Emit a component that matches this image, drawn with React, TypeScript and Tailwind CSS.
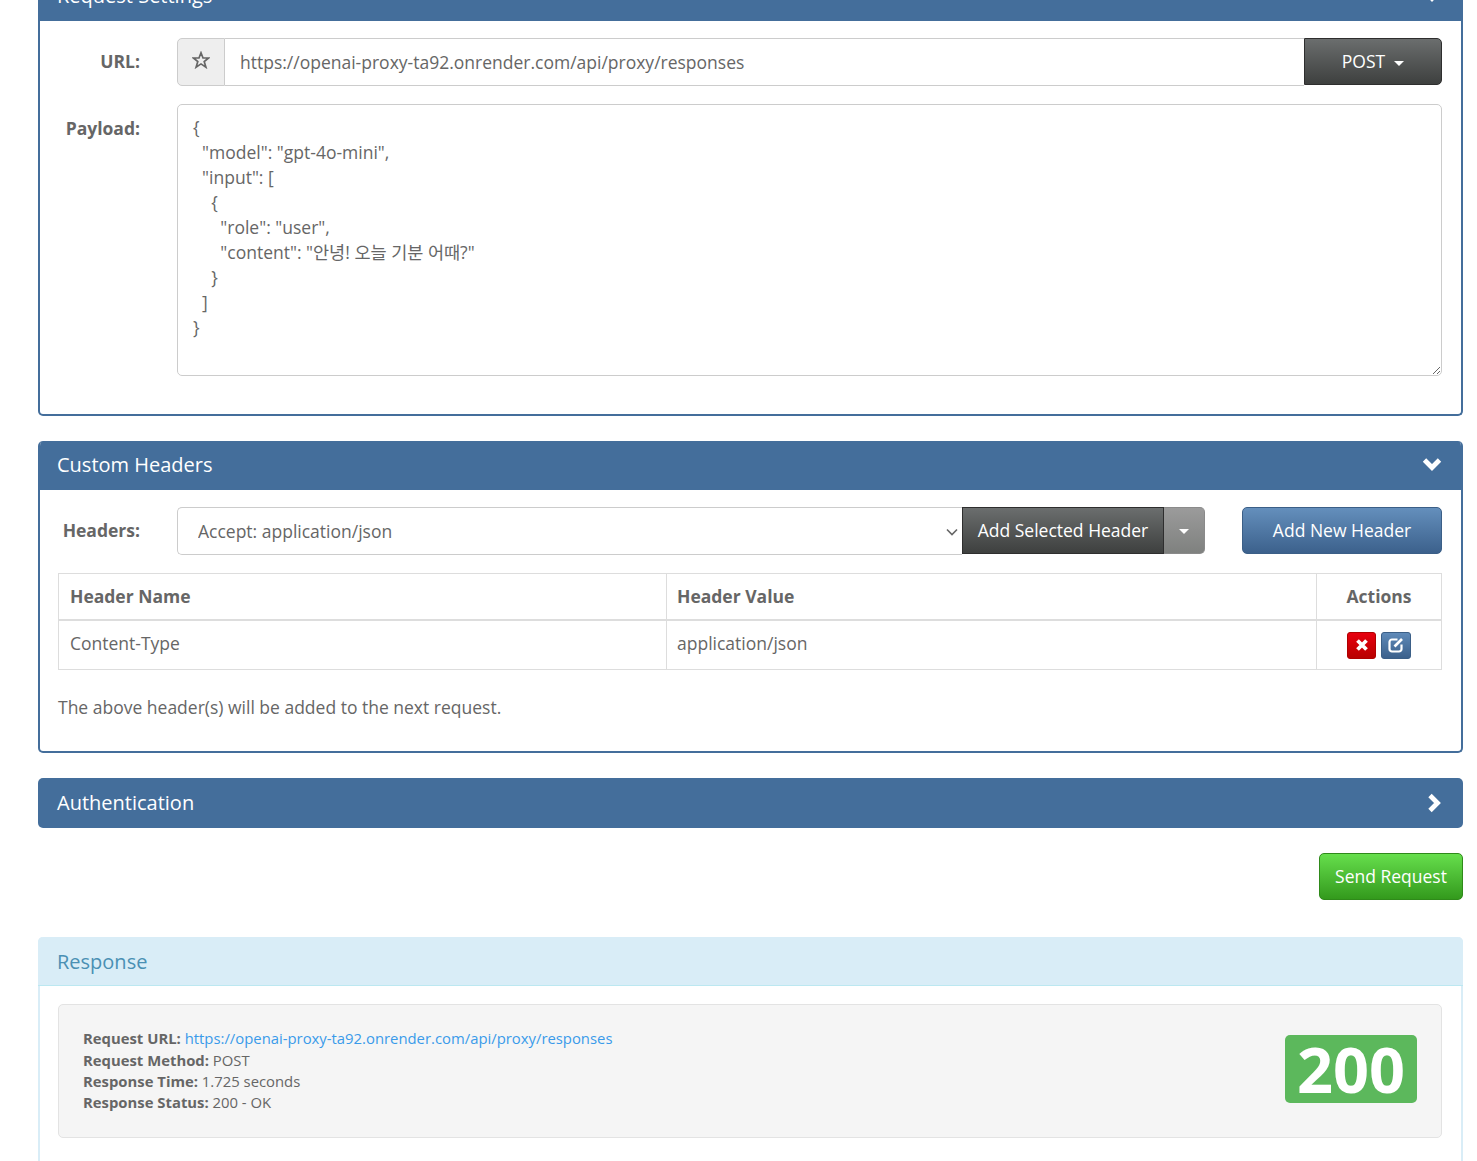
import type { ReactNode } from 'react';

const PAYLOAD = `{
  "model": "gpt-4o-mini",
  "input": [
    {
      "role": "user",
      "content": "안녕! 오늘 기분 어때?"
    }
  ]
}`;

const FONT = "font-['Open_Sans','Noto_Sans_CJK_KR',sans-serif]";

function Caret({ className = '' }: { className?: string }) {
  return <span className={`inline-block w-0 h-0 border-x-[5px] border-x-transparent border-t-[5px] border-t-white ${className}`} />;
}

function PanelHeader({ title, icon }: { title: string; icon?: ReactNode }) {
  return (
    <div className="h-[49px] shrink-0 bg-[#446e9b] flex items-center justify-between pl-[19px] pr-[20px] text-white text-[20px]">
      <span className="-mt-[2px]">{title}</span>
      {icon}
    </div>
  );
}

function ChevronDown() {
  return (
    <svg width="20" height="14" viewBox="0 0 20 14" className="block -mt-[3px] translate-x-[-1px]">
      <path d="M2.5 3 L10 10.5 L17.5 3" fill="none" stroke="white" strokeWidth="4.8" />
    </svg>
  );
}

function ChevronRight() {
  return (
    <svg width="16" height="20" viewBox="0 0 16 20" className="block translate-x-[-1px]">
      <path d="M4 2.5 L11.5 10 L4 17.5" fill="none" stroke="white" strokeWidth="4.8" />
    </svg>
  );
}

export default function App() {
  return (
    <div className={`${FONT} h-[1161px] overflow-hidden bg-white pl-[38px] pr-[14px] text-[#666] text-[17.5px] leading-[25px]`}>
      {/* Request Settings, scrolled partly off the page */}
      <div className="-mt-[28px] rounded-[5px] border-2 border-t-0 border-[#446e9b] overflow-hidden">
        <div className="-mx-[2px]">
          <PanelHeader title="Request Settings" icon={<ChevronDown />} />
        </div>
        <div className="pt-[17px] pl-[18px] pr-[19px] pb-[38px]">
          <div className="flex">
            <label className="w-[82px] shrink-0 text-right font-bold leading-[47px]">URL:</label>
            <div className="ml-[37px] flex-1 flex h-[48px]">
              <span className="w-[48px] shrink-0 flex items-center justify-center bg-[#eee] border border-[#ccc] rounded-l-[5px]">
                <svg width="18" height="18" viewBox="0 0 18 18" className="-mt-[4px]">
                  <polygon
                    points="9,1.8 11,7 16.6,7 12.2,10.6 13.9,16.2 9,12.9 4.1,16.2 5.8,10.6 1.4,7 7,7"
                    fill="none"
                    stroke="#666"
                    strokeWidth="1.7"
                  />
                </svg>
              </span>
              <input
                readOnly
                value="https://openai-proxy-ta92.onrender.com/api/proxy/responses"
                className="flex-1 min-w-0 border-y border-[#ccc] px-[15px] outline-none bg-white"
              />
              <button className="w-[138px] shrink-0 rounded-r-[5px] border border-[#2e2e2e] bg-linear-to-b from-[#6b6e6e] to-[#3e403f] text-white flex items-center justify-center gap-[9px] h-[47px]">
                POST <Caret className="mt-[3px]" />
              </button>
            </div>
          </div>
          <div className="flex mt-[18px]">
            <label className="w-[82px] shrink-0 text-right font-bold pt-[12px]">Payload:</label>
            <textarea
              readOnly
              value={PAYLOAD}
              className="ml-[37px] flex-1 h-[272px] border border-[#ccc] rounded-[5px] pt-[10px] px-[15px] outline-none resize-y bg-white leading-[25px]"
            />
          </div>
        </div>
      </div>

      {/* Custom Headers */}
      <div className="mt-[25px] rounded-[5px] border-2 border-t-0 border-[#446e9b] overflow-hidden">
        <div className="-mx-[2px]">
          <PanelHeader title="Custom Headers" icon={<ChevronDown />} />
        </div>
        <div className="pt-[17px] pl-[18px] pr-[19px] pb-[31px]">
          <div className="flex h-[48px]">
            <label className="w-[82px] shrink-0 text-right font-bold leading-[47px]">Headers:</label>
            <div className="relative ml-[37px] w-[785px] shrink-0">
              <select className="appearance-none w-full h-[48px] border border-[#ccc] border-r-0 rounded-l-[5px] pl-[20px] pr-[24px] bg-white outline-none">
                <option>Accept: application/json</option>
              </select>
              <svg width="12" height="8" viewBox="0 0 12 8" className="absolute right-[4px] top-[21px] pointer-events-none">
                <path d="M1 1.5 L6 6.5 L11 1.5" fill="none" stroke="#666" strokeWidth="1.6" />
              </svg>
            </div>
            <button className="w-[202px] shrink-0 h-[47px] border border-[#2e2e2e] bg-linear-to-b from-[#6b6e6e] to-[#3e403f] text-white">
              Add Selected Header
            </button>
            <button className="w-[41px] shrink-0 h-[47px] rounded-r-[5px] border border-[#8a8a8a] border-l-0 bg-linear-to-b from-[#9b9b9b] to-[#7f817f] flex items-center justify-center">
              <Caret className="mt-[2px]" />
            </button>
            <button className="ml-[37px] flex-1 h-[47px] rounded-[5px] border border-[#3b5f87] bg-linear-to-b from-[#648fbc] to-[#3c618c] text-white">
              Add New Header
            </button>
          </div>

          <table className="mt-[18px] w-full table-fixed border-collapse border border-[#ddd]">
            <colgroup>
              <col className="w-[608px]" />
              <col className="w-[650px]" />
              <col />
            </colgroup>
            <thead>
              <tr className="h-[46px] border-b-2 border-[#ddd]">
                <th className="border-r border-[#ddd] text-left font-bold pl-[11px]">Header Name</th>
                <th className="border-r border-[#ddd] text-left font-bold pl-[10px]">Header Value</th>
                <th className="text-center font-bold">Actions</th>
              </tr>
            </thead>
            <tbody>
              <tr className="h-[50px]">
                <td className="border-r border-[#ddd] pl-[11px] pb-[2px]">Content-Type</td>
                <td className="border-r border-[#ddd] pl-[10px] pb-[2px]">application/json</td>
                <td>
                  <div className="flex justify-center gap-[5px] pt-[1px]">
                    <button className="w-[29px] h-[27px] rounded-[3px] border border-[#b00000] bg-linear-to-b from-[#e8000f] to-[#b80000] flex items-center justify-center">
                      <svg width="14" height="14" viewBox="0 0 14 14">
                        <path d="M2.5 2.5 L11.5 11.5 M11.5 2.5 L2.5 11.5" stroke="white" strokeWidth="3.8" fill="none" />
                      </svg>
                    </button>
                    <button className="w-[30px] h-[27px] rounded-[3px] border border-[#3b5f87] bg-linear-to-b from-[#5f8ab8] to-[#3c618c] flex items-center justify-center">
                      <svg width="18" height="18" viewBox="0 0 18 18">
                        <path d="M10.5 3.5 H5 a2.5 2.5 0 0 0 -2.5 2.5 V13 a2.5 2.5 0 0 0 2.5 2.5 H12 a2.5 2.5 0 0 0 2.5 -2.5 V8.5" fill="none" stroke="white" strokeWidth="2.2" />
                        <path d="M7.5 10.5 L15 3" fill="none" stroke="white" strokeWidth="2.6" />
                      </svg>
                    </button>
                  </div>
                </td>
              </tr>
            </tbody>
          </table>

          <p className="mt-[25px]">The above header(s) will be added to the next request.</p>
        </div>
      </div>

      {/* Authentication */}
      <div className="mt-[25px] rounded-[5px] overflow-hidden">
        <div className="h-[50px] bg-[#446e9b] flex items-center justify-between pl-[19px] pr-[20px] text-white text-[20px]">
          <span className="-mt-[2px]">Authentication</span>
          <ChevronRight />
        </div>
      </div>

      <div className="mt-[25px] flex justify-end">
        <button className="w-[144px] h-[47px] rounded-[5px] border border-[#2f8a1a] bg-linear-to-b from-[#66df4c] to-[#339a1c] text-white">
          Send Request
        </button>
      </div>

      {/* Response */}
      <div className="mt-[37px] rounded-t-[5px] border-x-2 border-[#d9edf7] min-h-[300px]">
        <div className="-mx-[2px] h-[49px] rounded-t-[5px] bg-[#d9edf7] border-b border-[#bce8f1] flex items-center pl-[19px] text-[#4a90b4] text-[20px]">
          Response
        </div>
        <div className="pt-[18px] pl-[18px] pr-[19px]">
          <div className="h-[134px] rounded-[5px] border border-[#e3e3e3] bg-[#f5f5f5] flex items-center justify-between pl-[24px] pr-[24px] text-[14.85px] leading-[21.4px]">
            <div>
              <div><b>Request URL:</b> <a className="text-[#3a9bea]">https://openai-proxy-ta92.onrender.com/api/proxy/responses</a></div>
              <div><b>Request Method:</b> POST</div>
              <div><b>Response Time:</b> 1.725 seconds</div>
              <div><b>Response Status:</b> 200 - OK</div>
            </div>
            <span className="w-[132px] h-[68px] -mt-[4px] rounded-[5px] bg-[#5cb85c] text-white font-bold text-[63px] leading-[68px] text-center">200</span>
          </div>
        </div>
      </div>
    </div>
  );
}
